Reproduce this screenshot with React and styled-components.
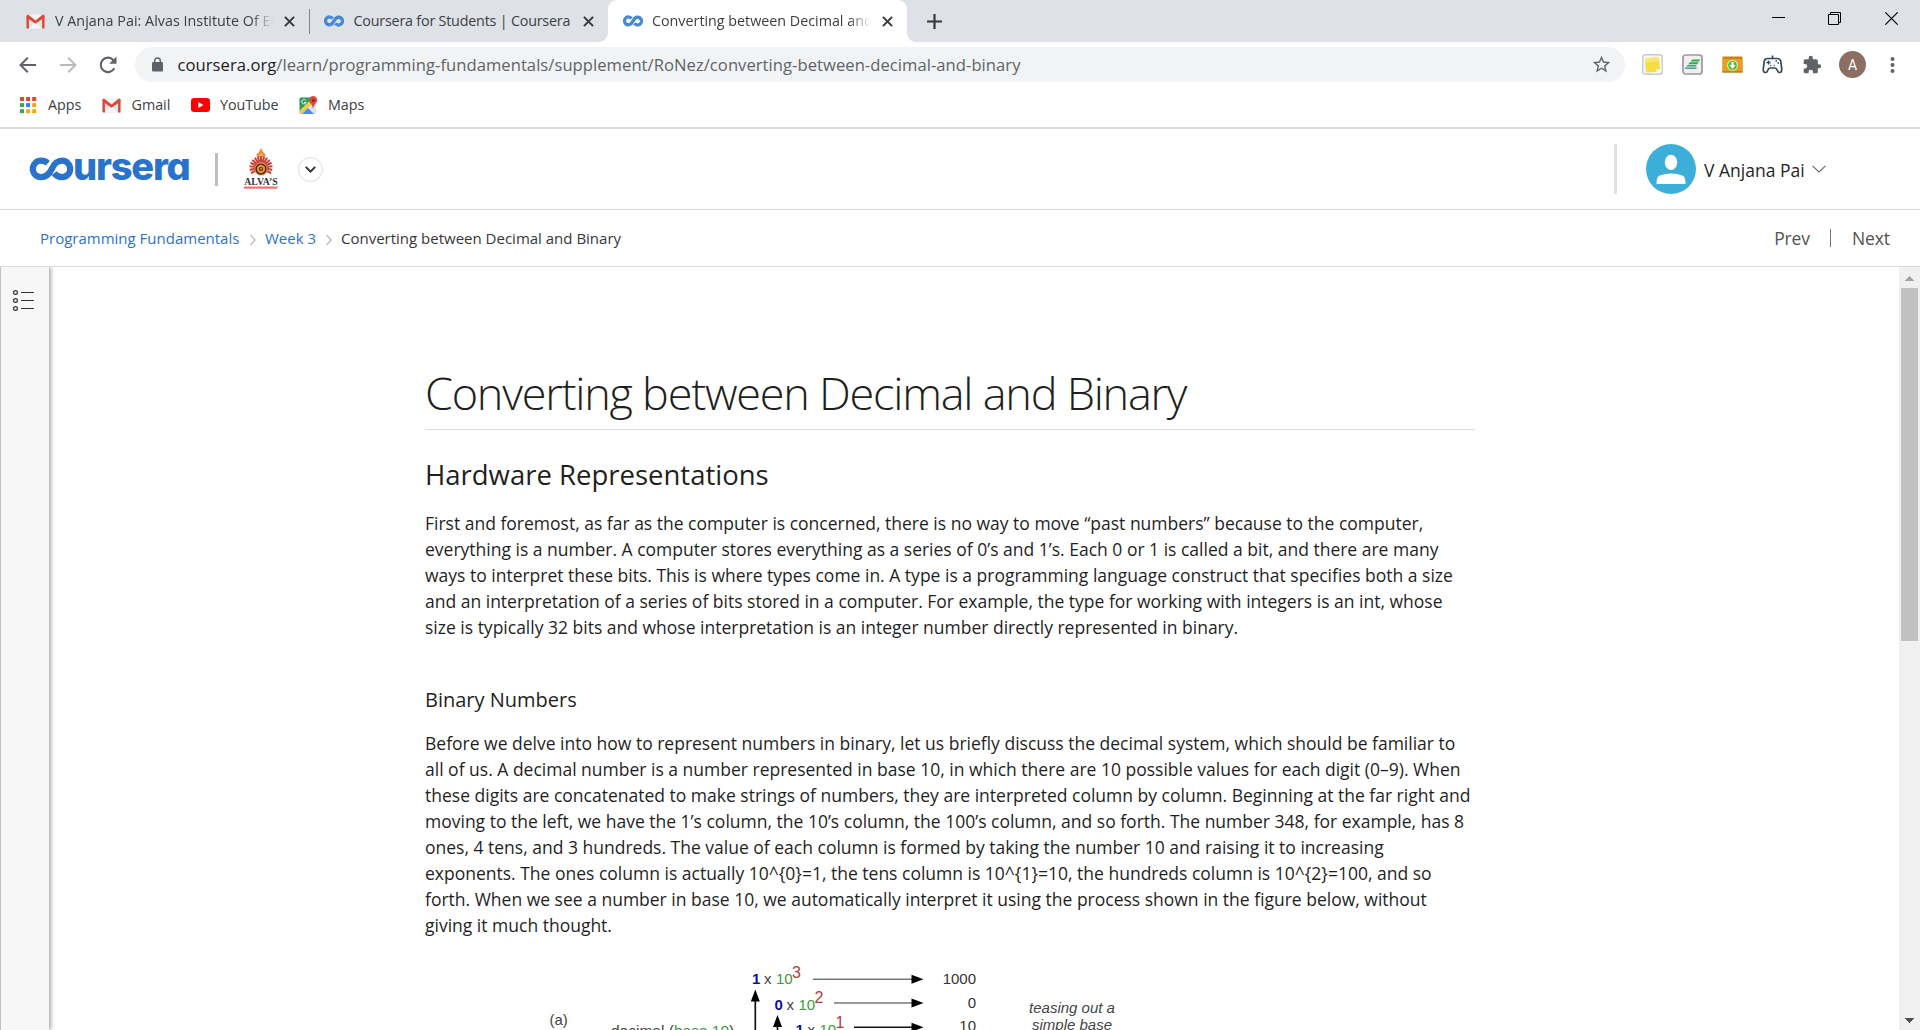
import React from "react";
import styled, { createGlobalStyle, css } from "styled-components";

const Global = createGlobalStyle`
  * { box-sizing: border-box; }
  html, body { margin: 0; padding: 0; background: #fff; overflow: hidden; }
  body { font-family: "Open Sans", "Noto Sans", sans-serif; color: #1f1f1f; }
  svg { display: block; flex: none; }
`;

const Window = styled.div`
  width: 1920px;
  height: 1030px;
  display: flex;
  flex-direction: column;
  overflow: hidden;
  background: #fff;
`;

/* ---------- browser chrome ---------- */
const TabStrip = styled.div`
  height: 42px;
  flex: none;
  display: flex;
  background: #dee1e6;
`;

const Tab = styled.div`
  width: ${(p) => p.$w}px;
  height: 42px;
  display: flex;
  align-items: center;
  padding: 0 14px 0 ${(p) => p.$pad}px;
  position: relative;
  ${(p) =>
    p.$active &&
    css`
      background: #fff;
      border-radius: 9px 9px 0 0;
      &::before,
      &::after {
        content: "";
        position: absolute;
        bottom: 0;
        width: 9px;
        height: 9px;
      }
      &::before {
        left: -9px;
        background: radial-gradient(circle at 0 0, transparent 8.5px, #fff 9.2px);
      }
      &::after {
        right: -9px;
        background: radial-gradient(circle at 100% 0, transparent 8.5px, #fff 9.2px);
      }
    `}
`;

const TabIcon = styled.div`
  width: ${(p) => p.$w}px;
  flex: none;
`;

const TabTitle = styled.div`
  flex: 1;
  min-width: 0;
  overflow: hidden;
  white-space: nowrap;
  font-size: 14.3px;
  line-height: 22px;
  letter-spacing: ${(p) => p.$ls || 0}px;
  color: #3c4043;
  ${(p) =>
    p.$fade &&
    css`
      mask-image: linear-gradient(to right, #000 calc(100% - 22px), transparent);
    `}
`;

const TabClose = styled.div`
  width: 11px;
  margin-left: ${(p) => p.$gap}px;
  flex: none;
`;

const TabDivider = styled.div`
  width: 1px;
  height: 25px;
  margin-top: 9px;
  background: #80868b;
`;

const NewTab = styled.div`
  display: flex;
  align-items: center;
  padding-left: 20px;
`;

const WindowButtons = styled.div`
  margin-left: auto;
  display: flex;
  gap: 43px;
  padding: 12px 21px 0 0;
`;

const Toolbar = styled.div`
  height: 45px;
  flex: none;
  display: flex;
  align-items: center;
  padding-left: 18px;
`;

const NavButtons = styled.div`
  display: flex;
  gap: 20px;
  width: 117px;
`;

const UrlBar = styled.div`
  width: 1490px;
  height: 35px;
  border-radius: 18px;
  background: #f1f3f4;
  display: flex;
  align-items: center;
  padding: 0 13px 0 17px;
`;

const Url = styled.div`
  flex: 1;
  margin-left: 14.5px;
  font-size: 16.6px;
  line-height: 24px;
  letter-spacing: ${(p) => p.$ls}px;
  color: #5f6368;
  white-space: nowrap;
  b {
    font-weight: 400;
    color: #202124;
  }
`;

const Extensions = styled.div`
  display: flex;
  align-items: center;
  gap: 19px;
  margin-left: 17px;
`;

const ProfileBadge = styled.div`
  width: 27px;
  height: 27px;
  margin-left: 17px;
  border-radius: 50%;
  background: #8d6e63;
  color: #fff;
  font: 14px/28px Roboto, sans-serif;
  text-align: center;
`;

const Bookmarks = styled.div`
  height: 42px;
  flex: none;
  display: flex;
  align-items: center;
  padding: 0 0 4px 19px;
  border-bottom: 2px solid #dadce0;
`;

const Bookmark = styled.div`
  display: flex;
  align-items: center;
  gap: ${(p) => p.$gap || 11}px;
  width: ${(p) => p.$w}px;
  font-size: 14.3px;
  line-height: 20px;
  letter-spacing: ${(p) => p.$ls || 0}px;
  color: #3c4043;
`;

/* ---------- site header ---------- */
const Header = styled.header`
  height: 81px;
  flex: none;
  display: flex;
  align-items: center;
  padding-left: 29px;
  border-bottom: 1px solid #dcdcdc;
`;

const Brand = styled.div`
  display: flex;
  align-items: center;
  width: 186px;
  height: 50px;
  color: #2a73cc;
`;

const BrandText = styled.span`
  margin: -7px 0 0 -1px;
  font-family: Inter, sans-serif;
  font-weight: 800;
  font-size: 38px;
  line-height: 44px;
  letter-spacing: -1.2px;
  font-feature-settings: "cv11";
`;

const Rule = styled.div`
  width: 3px;
  height: ${(p) => p.$h}px;
  background: ${(p) => p.$c};
`;

const Partner = styled.div`
  margin-left: 26px;
`;

const RoundToggle = styled.button`
  width: 25px;
  height: 25px;
  margin-left: 20px;
  padding: 0;
  border: 1px solid #dcdcdc;
  border-radius: 50%;
  background: #fff;
  display: flex;
  align-items: center;
  justify-content: center;
`;

const Account = styled.div`
  margin-left: auto;
  width: 306px;
  display: flex;
  align-items: center;
`;

const AccountAvatar = styled.div`
  margin-left: 29px;
`;

const AccountName = styled.span`
  width: 108px;
  margin-left: 8px;
  padding-top: 2px;
  font-size: 17.5px;
  line-height: 26px;
  letter-spacing: ${(p) => p.$ls}px;
  white-space: nowrap;
`;

const Crumbs = styled.nav`
  height: 57px;
  flex: none;
  display: flex;
  align-items: center;
  padding: 0 30px 0 40px;
  border-bottom: 1px solid #dcdcdc;
  font-size: 15px;
  line-height: 22px;
  color: #333;
`;

const Crumb = styled.span`
  width: ${(p) => p.$w}px;
  white-space: nowrap;
  color: ${(p) => (p.$link ? "#2a73cc" : "#373737")};
  letter-spacing: ${(p) => p.$ls || 0}px;
`;

const CrumbArrow = styled.span`
  width: ${(p) => p.$w}px;
  padding: 4px 0 0 10px;
`;

const Pager = styled.div`
  margin-left: auto;
  display: flex;
  align-items: center;
  gap: 20.5px;
  font-size: 17.5px;
  color: #525252;
  letter-spacing: -0.1px;
  i {
    width: 1px;
    height: 18px;
    background: #757575;
  }
`;

/* ---------- reading area ---------- */
const Body = styled.div`
  flex: 1;
  min-height: 0;
  display: flex;
`;

const Rail = styled.aside`
  width: 49px;
  flex: none;
  padding: 23px 0 0 12px;
  background: #f7f7f7;
  border-left: 1px solid #c4c4c4;
  box-shadow: 2px 0 4px rgba(0, 0, 0, 0.35);
  clip-path: inset(0 -8px 0 0);
`;

const Scroll = styled.main`
  flex: 1;
  overflow: hidden;
  padding: 97px 0 0 376px;
`;

const Article = styled.article`
  width: 1050px;
`;

const Title = styled.h1`
  margin: 0;
  height: 66px;
  border-bottom: 1px solid #dcdcdc;
  font-weight: 300;
  font-size: 45px;
  line-height: 58px;
  letter-spacing: ${(p) => p.$ls}px;
  white-space: nowrap;
`;

const Heading = styled.h2`
  margin: 25px 0 0;
  font-weight: 400;
  font-size: 27.5px;
  line-height: 40px;
  letter-spacing: ${(p) => p.$ls}px;
`;

const SubHeading = styled.h3`
  margin: 46px 0 0;
  font-weight: 400;
  font-size: 20px;
  line-height: 28px;
  letter-spacing: ${(p) => p.$ls}px;
`;

const Para = styled.p`
  margin: ${(p) => p.$top}px 0 0;
`;

const Line = styled.span`
  display: block;
  font-size: 17.5px;
  line-height: 26px;
  white-space: nowrap;
  letter-spacing: ${(p) => p.$ls || 0}px;
`;

const Figure = styled.figure`
  margin: 17px 0 0;
`;

const ScrollBar = styled.div`
  width: 21px;
  flex: none;
  background: #f0f0f0;
  display: flex;
  flex-direction: column;
  align-items: center;
`;

const ScrollArrow = styled.div`
  height: 21px;
  display: flex;
  align-items: center;
  padding-top: ${(p) => p.$drop || 0}px;
`;

const Thumb = styled.div`
  width: 17px;
  height: 353px;
  margin-bottom: auto;
  background: #c1c1c1;
`;

/* ---------- icons ---------- */
const GmailIcon = () => (
  <svg width="19" height="15" viewBox="0 0 19 15">
    <rect x="0.5" y="0.5" width="18" height="14" rx="1.2" fill="#e4e4e4" />
    <path d="M3 14.5 9.5 8l6.500 6.500z" fill="#f6f6f6" />
    <path d="M3 .7h13L9.500 6z" fill="#f4f4f4" />
    <path d="M.5 14.500V1.800l2.400.4v12.300H1.300q-.8 0-.8-.8zM18.500 14.500V1.800l-2.400.4v12.300z" fill="#d6483b" />
    <path d="M.5 2.200Q.5.600 2 .6l7.500 6L17 .6q1.500 0 1.500 1.600v1.300L9.500 9.700.5 3.500z" fill="#d9493c" />
  </svg>
);

const InfinityIcon = () => (
  <svg width="20" height="12" viewBox="0 0 20 12" fill="none" stroke="#4889d0" strokeWidth="3.300">
    <path d="M8.600 3.600A3.900 3.900 0 1 0 8 8.800L12 3.200a3.900 3.900 0 1 1-.6 5.200" />
  </svg>
);

const CloseIcon = () => (
  <svg width="11" height="11" viewBox="0 0 11 11" stroke="#35393c" strokeWidth="2">
    <path d="M.9.900l9.200 9.200M10.100.900.900 10.100" />
  </svg>
);

const AppsIcon = () => (
  <svg width="18" height="18" viewBox="0 0 18 18">
    {["#ea4335", "#ea4335", "#ea4335", "#34a853", "#2a84f0", "#f6a800", "#34a853", "#f6a800", "#f6a800"].map((c, i) => (
      <rect key={i} x={1 + (i % 3) * 6.1} y={1 + Math.floor(i / 3) * 6.1} width="4" height="4" fill={c} />
    ))}
  </svg>
);

const YouTubeIcon = () => (
  <svg width="19" height="14" viewBox="0 0 19 14">
    <rect width="19" height="14" rx="3.200" fill="#f00" />
    <path d="M7.300 4v6l5.200-3z" fill="#fff" />
  </svg>
);

const MapsIcon = () => (
  <svg width="19" height="19" viewBox="0 0 19 19">
    <rect x="0.500" y="1.500" width="16.500" height="16.500" rx="1.500" fill="#e8e8e8" />
    <path d="M2 1.500h12L.500 15V3Q.500 1.500 2 1.500z" fill="#2a9d58" />
    <path d="M.500 15 12 4l2.500 2.500L2.500 18H2Q.500 18 .500 16.500z" fill="#f8c93a" />
    <path d="M3 18l6-6 6 6z" fill="#4a8af4" />
    <path d="M9 10.500l8 7.500V9z" fill="#dfe1e3" />
    <path d="M6.900 4.600A2.200 2.200 0 1 0 7 6.500H5" fill="none" stroke="#fff" strokeWidth="1" />
    <path d="M14 13Q13.600 9.500 11.500 7.300A4.100 4.100 0 1 1 17 7Q14.600 9.500 14 13z" fill="#de4a3e" />
    <circle cx="14.300" cy="4.400" r="1.500" fill="#7d2a23" />
  </svg>
);

const CourseraMark = () => (
  <svg width="45" height="24" viewBox="0 0 45 24" fill="none" stroke="#2a73cc" strokeWidth="6.200">
    <path d="M18.800 6.200C16.900 4.500 14.700 3.700 12 3.700a8.200 8.200 0 1 0 0 16.400c5.500 0 8.500-3.200 10.800-8.200S27.800 3.700 33 3.700a8.200 8.200 0 1 1 0 16.400c-3.200 0-5.900-1.300-7.800-4" />
  </svg>
);

const AlvasLogo = () => (
  <svg width="34" height="42" viewBox="0 0 34 42">
    <path d="M17 0l2 4 3 3-2.500 2h-5L12 7l3-3z" fill="#f0883a" />
    <path d="M17 5l2 3h-4z" fill="#fbd04d" />
    {[-120, -102, -84, -66, -49, -32, -16, 0, 16, 32, 49, 66, 84, 102, 120].map((a) => (
      <path key={a} d="M17 14.500V8" stroke="#c9453a" strokeWidth="2.100" transform={`rotate(${a} 17 19.500)`} />
    ))}
    <circle cx="17" cy="21" r="6.600" fill="#e88a4a" />
    <circle cx="17" cy="21" r="5.600" fill="#3b2a26" />
    <circle cx="17" cy="21" r="4.200" fill="#ef8b2f" />
    <circle cx="17" cy="21" r="2" fill="#5d2a1a" />
    <circle cx="17" cy="20.800" r=".9" fill="#f7b04a" />
    <text x="17" y="36.800" textAnchor="middle" fontFamily="'Liberation Serif', serif" fontWeight="700" fontSize="9.500" textLength="33.500" lengthAdjust="spacingAndGlyphs" fill="#333">
      ALVA’S
    </text>
    <rect y="38.500" width="33.500" height="2.200" fill="#e8746e" />
  </svg>
);

const Triangle = ({ d, c }) => (
  <svg width="9" height="5" viewBox="0 0 9 5" shapeRendering="crispEdges">
    <path d={d} fill={c} />
  </svg>
);

const NoteIcon = () => (
  <svg width="21" height="21" viewBox="0 0 21 21">
    <rect x=".8" y=".8" width="19.400" height="19.400" rx="2.500" fill="#f8f8f8" stroke="#c9c9c9" strokeWidth="1.400" />
    <path d="M3 4.500 17 3l1 12-3.500 3-10.500.500z" fill="#f6dc45" />
    <path d="M3 4.500 17 3l.3 4-14 2z" fill="#fae86e" />
    <path d="M18 15l-3.500 3-.5-2.800z" fill="#fff6b0" />
  </svg>
);

const StripesIcon = () => (
  <svg width="21" height="21" viewBox="0 0 21 21">
    <rect x="1" y="1" width="19" height="19" rx="2.500" fill="#efefef" stroke="#9b9b9b" strokeWidth="1.700" />
    <path d="M10.500 5.500H18.500l-2 2H8.500z" fill="#35a853" />
    <path d="M8 8.200h9l-2 2H6z" fill="#35a853" />
    <path d="M5.700 10.900H15l-1.700 1.700H4z" fill="#35a853" />
    <path d="M3.500 13.400h11v1.300H2.800z" fill="#2878b5" />
  </svg>
);

const FolderIcon = () => (
  <svg width="21" height="21" viewBox="0 0 21 21">
    <path d="M.5 3.500q0-1 1-1H19.500q1 0 1 1v15H.5z" fill="#c98218" />
    <rect x=".5" y="5" width="20" height="13" fill="#e99d25" />
    <rect x=".5" y="17.200" width="20" height="1.300" fill="#b97920" />
    <circle cx="10.500" cy="11.300" r="5" fill="#59b52e" stroke="#c6e8a4" strokeWidth="1.300" />
    <path d="M9.300 8h2.400v3.200h2L10.500 14.800l-3.200-3.600h2z" fill="#fff" />
  </svg>
);

const GamepadIcon = () => (
  <svg width="21" height="21" viewBox="0 0 21 21" fill="none" stroke="#34495e" strokeWidth="1.700">
    <path d="M10.500 4.500V1.500M5.500 4.500h10Q18 4.500 18.700 7l1 7.500q.3 4-2 4-1.700 0-2.500-2.200T13 14H8q-1.500 0-2.200 2.300T3.300 18.500q-2.300 0-2-4l1-7.500Q3 4.500 5.500 4.500z" />
    <path d="M6.500 6.500v4M4.500 8.500h4" strokeWidth="1.300" />
    <path d="M13.500 7h1.500M15.500 9h1.500M8.300 11.500h1M11.700 11.500h1" strokeWidth="1.500" />
  </svg>
);

const PuzzleIcon = () => (
  <svg width="20" height="20" viewBox="0 0 24 24" fill="#5f6368">
    <path d="M20.500 11H19V7a2 2 0 0 0-2-2h-4V3.500a2.500 2.500 0 0 0-5 0V5H4a2 2 0 0 0-2 2v3.800h1.500a2.700 2.700 0 0 1 0 5.400H2V20a2 2 0 0 0 2 2h3.800v-1.500a2.700 2.700 0 0 1 5.400 0V22H17a2 2 0 0 0 2-2v-4h1.500a2.500 2.500 0 0 0 0-5z" />
  </svg>
);

const Chevron = () => (
  <svg width="6" height="12" viewBox="0 0 6 12" fill="none" stroke="#8c8c8c">
    <path d="M.6 1l4.600 5-4.600 5" />
  </svg>
);

/* ---------- figure ---------- */
const Term = ({ x, y, digit, power }) => (
  <g>
    <text x={x} y={y} fontWeight="700" fill="#10109c">{digit}</text>
    <text x={x + 12} y={y}>x</text>
    <text x={x + 24} y={y} fill="#3a9a3a">10</text>
    <text x={x + 40} y={y - 6.500} fontSize="16" fill="#b0403a">{power}</text>
  </g>
);

const RightArrow = ({ x, y, c }) => (
  <g>
    <path d={`M${x} ${y}H490`} stroke={c} strokeWidth="1.400" />
    <path d={`M486.500 ${y - 4.500}v9l12-4.500z`} fill="#000" />
  </g>
);

const UpArrow = ({ x, y }) => (
  <g>
    <path d={`M${x} ${y + 8}V100`} stroke="#111" strokeWidth="1.700" />
    <path d={`M${x - 4.500} ${y + 12}h9L${x} ${y}z`} fill="#000" />
  </g>
);

/* Place-value breakdown; local origin sits at the figure's top left corner. */
const PlaceValueFigure = () => (
  <svg width="1050" height="100" viewBox="0 0 1050 100" fontFamily="'Liberation Sans', Arial, sans-serif" fontSize="15" fill="#444">
    <text x="124.500" y="70">(a)</text>
    <text x="186" y="80.500" fontSize="15.500">
      decimal (<tspan fill="#3a9a3a">base 10</tspan>)
    </text>
    <Term x={327} y={29} digit="1" power="3" />
    <Term x={349.500} y={54.500} digit="0" power="2" />
    <Term x={370.500} y={79.500} digit="1" power="1" />
    <UpArrow x={330.300} y={34.500} />
    <UpArrow x={352.500} y={60} />
    <RightArrow x={388} y={24.300} c="#777" />
    <RightArrow x={409} y={48} c="#777" />
    <RightArrow x={429} y={72.300} c="#111" />
    <g textAnchor="end" fill="#333">
      <text x="551" y="29">1000</text>
      <text x="551" y="53">0</text>
      <text x="551" y="76">10</text>
    </g>
    <g textAnchor="middle" fontStyle="italic">
      <text x="647" y="58">teasing out a</text>
      <text x="647" y="75">simple base</text>
    </g>
  </svg>
);

const INTRO = [
  "First and foremost, as far as the computer is concerned, there is no way to move “past numbers” because to the computer,",
  "everything is a number. A computer stores everything as a series of 0’s and 1’s. Each 0 or 1 is called a bit, and there are many",
  "ways to interpret these bits. This is where types come in. A type is a programming language construct that specifies both a size",
  "and an interpretation of a series of bits stored in a computer. For example, the type for working with integers is an int, whose",
  "size is typically 32 bits and whose interpretation is an integer number directly represented in binary.",
];

const BINARY = [
  "Before we delve into how to represent numbers in binary, let us briefly discuss the decimal system, which should be familiar to",
  "all of us. A decimal number is a number represented in base 10, in which there are 10 possible values for each digit (0–9). When",
  "these digits are concatenated to make strings of numbers, they are interpreted column by column. Beginning at the far right and",
  "moving to the left, we have the 1’s column, the 10’s column, the 100’s column, and so forth. The number 348, for example, has 8",
  "ones, 4 tens, and 3 hundreds. The value of each column is formed by taking the number 10 and raising it to increasing",
  "exponents. The ones column is actually 10^{0}=1, the tens column is 10^{1}=10, the hundreds column is 10^{2}=100, and so",
  "forth. When we see a number in base 10, we automatically interpret it using the process shown in the figure below, without",
  "giving it much thought.",
];

export default function App() {
  return (
    <Window>
      <Global />
      <TabStrip>
        <Tab $w={309} $pad={26}>
          <TabIcon $w={29}><GmailIcon /></TabIcon>
          <TabTitle $fade $ls={0.03}>V Anjana Pai: Alvas Institute Of En</TabTitle>
          <TabClose $gap={11}><CloseIcon /></TabClose>
        </Tab>
        <TabDivider />
        <Tab $w={298} $pad={14}>
          <TabIcon $w={29.5}><InfinityIcon /></TabIcon>
          <TabTitle $ls={-0.19}>Coursera for Students | Coursera</TabTitle>
          <TabClose $gap={11}><CloseIcon /></TabClose>
        </Tab>
        <Tab $w={299} $pad={15} $active>
          <TabIcon $w={29}><InfinityIcon /></TabIcon>
          <TabTitle $fade>Converting between Decimal and Binary</TabTitle>
          <TabClose $gap={11}><CloseIcon /></TabClose>
        </Tab>
        <NewTab>
          <svg width="15" height="15" viewBox="0 0 15 15" stroke="#35393c" strokeWidth="2.200">
            <path d="M7.500 0v15M0 7.500h15" />
          </svg>
        </NewTab>
        <WindowButtons>
          <svg width="13" height="13" viewBox="0 0 13 13" stroke="#000"><path d="M0 5.500h13" /></svg>
          <svg width="13" height="13" viewBox="0 0 13 13" fill="none" stroke="#000">
            <path d="M.5 2.500h10v10H.5zM2.500 2.500v-2h10v10h-2" />
          </svg>
          <svg width="15" height="13" viewBox="0 0 15 13" stroke="#000" strokeWidth="1.100"><path d="M1.300.300l12.400 12.400M13.700.300 1.300 12.700" /></svg>
        </WindowButtons>
      </TabStrip>

      <Toolbar>
        <NavButtons>
          <svg width="20" height="20" viewBox="0 0 20 20" fill="none" stroke="#5f6368" strokeWidth="2"><path d="M18 10H3M9.800 2.700 2.500 10l7.300 7.300" /></svg>
          <svg width="20" height="20" viewBox="0 0 20 20" fill="none" stroke="#b9bbbe" strokeWidth="2"><path d="M2 10h15M10.200 2.700 17.500 10l-7.300 7.300" /></svg>
          <svg width="20" height="20" viewBox="0 0 20 20" fill="none" stroke="#5f6368" strokeWidth="2.100">
            <path d="M16.300 13.200A7.200 7.200 0 1 1 15.500 5.300" />
            <path d="M18.500 1.500v7.300h-7.300z" fill="#5f6368" stroke="none" />
          </svg>
        </NavButtons>
        <UrlBar>
          <svg width="11" height="15" viewBox="0 0 11 15">
            <rect y="5" width="11" height="9.500" rx="1.200" fill="#5f6368" />
            <path d="M2.700 5.500V3.800a2.800 2.800 0 0 1 5.600 0v1.700" fill="none" stroke="#5f6368" strokeWidth="1.500" />
          </svg>
          <Url $ls={0.045}><b>coursera.org</b>/learn/programming-fundamentals/supplement/RoNez/converting-between-decimal-and-binary</Url>
          <svg width="21" height="21" viewBox="0 0 24 24" fill="#5f6368">
            <path d="M22 9.240l-7.190-.62L12 2 9.190 8.630 2 9.240l5.460 4.730L5.820 21 12 17.270 18.180 21l-1.630-7.030L22 9.240zM12 15.400l-3.760 2.270 1-4.280-3.320-2.880 4.380-.38L12 6.100l1.710 4.040 4.380.38-3.320 2.880 1 4.280L12 15.400z" />
          </svg>
        </UrlBar>
        <Extensions>
          <NoteIcon />
          <StripesIcon />
          <FolderIcon />
          <GamepadIcon />
          <PuzzleIcon />
        </Extensions>
        <ProfileBadge>A</ProfileBadge>
        <svg width="52" height="18" viewBox="0 0 52 18" fill="#5f6368">
          <circle cx="26.500" cy="3" r="2" /><circle cx="26.500" cy="9" r="2" /><circle cx="26.500" cy="15" r="2" />
        </svg>
      </Toolbar>

      <Bookmarks>
        <Bookmark $w={83}><AppsIcon />Apps</Bookmark>
        <Bookmark $w={89} $gap={10.5}><GmailIcon />Gmail</Bookmark>
        <Bookmark $w={108} $gap={10} $ls={-0.05}><YouTubeIcon />YouTube</Bookmark>
        <Bookmark $w={80} $gap={10}><MapsIcon />Maps</Bookmark>
      </Bookmarks>

      <Header>
        <Brand aria-label="coursera">
          <CourseraMark />
          <BrandText>ursera</BrandText>
        </Brand>
        <Rule $h={33} $c="#bdbdbd" />
        <Partner><AlvasLogo /></Partner>
        <RoundToggle aria-label="Switch program">
          <svg width="11" height="7" viewBox="0 0 11 7" fill="none" stroke="#333" strokeWidth="2"><path d="M.8.900l4.700 4.700L10.200.900" /></svg>
        </RoundToggle>
        <Account>
          <Rule $h={50} $c="#e1e1e1" />
          <AccountAvatar>
            <svg width="50" height="50" viewBox="0 0 50 50">
              <circle cx="25" cy="25" r="25" fill="#3bafda" />
              <ellipse cx="25" cy="18.300" rx="6.300" ry="7.600" fill="#fff" />
              <path d="M10.500 40q0-7 2.500-8.200 6-2.300 12-2.300t12 2.300q2.500 1.200 2.500 8.200z" fill="#fff" />
            </svg>
          </AccountAvatar>
          <AccountName $ls={0}>V Anjana Pai</AccountName>
          <svg width="14" height="8" viewBox="0 0 14 8" fill="none" stroke="#666" strokeWidth="1.100"><path d="M.5.800 7 7 13.500.800" /></svg>
        </Account>
      </Header>

      <Crumbs>
        <Crumb $w={200} $link>Programming Fundamentals</Crumb>
        <CrumbArrow $w={25}><Chevron /></CrumbArrow>
        <Crumb $w={51} $link>Week 3</Crumb>
        <CrumbArrow $w={25}><Chevron /></CrumbArrow>
        <Crumb $w={290}>Converting between Decimal and Binary</Crumb>
        <Pager><span>Prev</span><i /><span>Next</span></Pager>
      </Crumbs>

      <Body>
        <Rail>
          <svg width="22" height="22" viewBox="0 0 22 22" fill="none" stroke="#333">
            {[2.500, 10.500, 18.500].map((y) => (
              <g key={y}>
                <circle cx="2.500" cy={y} r="1.900" strokeWidth="1.200" />
                <path d={`M8 ${y}h13`} />
              </g>
            ))}
          </svg>
        </Rail>
        <Scroll>
          <Article>
            <Title $ls={-1.23}>Converting between Decimal and Binary</Title>
            <Heading $ls={0}>Hardware Representations</Heading>
            <Para $top={15}>
              {INTRO.map((t) => <Line key={t}>{t}</Line>)}
            </Para>
            <SubHeading $ls={0}>Binary Numbers</SubHeading>
            <Para $top={16}>
              {BINARY.map((t) => <Line key={t}>{t}</Line>)}
            </Para>
            <Figure><PlaceValueFigure /></Figure>
          </Article>
        </Scroll>
        <ScrollBar>
          <ScrollArrow $drop={2}><Triangle d="M0 5h9L4.500 0z" c="#a3a3a3" /></ScrollArrow>
          <Thumb />
          <ScrollArrow $drop={2}><Triangle d="M0 0h9L4.500 5z" c="#505050" /></ScrollArrow>
        </ScrollBar>
      </Body>
    </Window>
  );
}
